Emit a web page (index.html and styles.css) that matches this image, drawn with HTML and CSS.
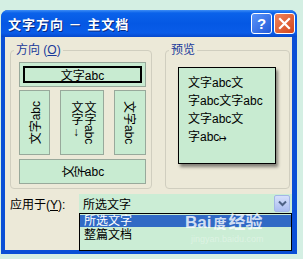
FILE: index.html
```html
<!DOCTYPE html>
<html lang="zh-CN">
<head>
<meta charset="UTF-8">
<title>文字方向 - 主文档</title>
<link rel="stylesheet" href="styles.css">
</head>
<body>
  <div class="window">
    <div class="titlebar">
      <span class="title">文字方向 － 主文档</span>
      <div class="title-buttons">
        <span class="tbtn help">?</span>
        <span class="tbtn close">
          <svg width="13" height="13" viewBox="0 0 13 13"><path d="M2 2 L11 11 M11 2 L2 11" stroke="#fff" stroke-width="2.2" stroke-linecap="square"/></svg>
        </span>
      </div>
    </div>
    <div class="client">
      <div class="groups">
        <fieldset class="group group-dir">
          <legend>方向 (<u>O</u>)</legend>
          <div class="group-body">
            <div class="opt opt-wide selected"><span class="inner">文字abc</span></div>
            <div class="opt-row">
              <div class="opt opt-v1"><span class="rot-up">文字abc</span></div>
              <div class="opt opt-v2"><span class="vert">文字abc<br>文字<span class="upright">↓</span></span></div>
              <div class="opt opt-v3"><span class="rot-down">文字abc</span></div>
            </div>
            <div class="opt opt-wide opt-bottom"><span class="side">文</span><span class="side">字</span>abc</div>
          </div>
        </fieldset>
        <fieldset class="group group-preview">
          <legend>预览</legend>
          <div class="group-body">
            <div class="page">文字abc文<br>字abc文字abc<br>文字abc文<br>字abc<span class="mark">↦</span></div>
          </div>
        </fieldset>
      </div>
      <div class="apply-row">
        <label>应用于(<u>Y</u>):</label>
        <div class="combo">
          <span class="combo-value">所选文字</span>
          <span class="combo-arrow">
            <svg width="9" height="7" viewBox="0 0 9 7"><path d="M1 1.5 L4.5 5 L8 1.5" fill="none" stroke="#4d6185" stroke-width="2"/></svg>
          </span>
          <ul class="combo-list">
            <li class="active">所选文字</li>
            <li>整篇文档</li>
          </ul>
        </div>
      </div>
      <div class="watermark">Bai<span class="paw">度</span>经验<div class="wm-url">jingyan.baidu.com</div></div>
    </div>
  </div>
</body>
</html>
```

FILE: styles.css
```css
body {
  margin: 0;
  background: #d4efe3;
  font-family: "Liberation Sans", "Noto Sans CJK SC", sans-serif;
  font-size: 12px;
  color: #000;
}
.window {
  margin: 10px 0 0 1px;
  width: 296px;
  height: 244px;
  background: #0a4fd6;
  border-radius: 7px 7px 0 0;
  display: flex;
  flex-direction: column;
}
.titlebar {
  height: 27px;
  display: flex;
  align-items: center;
  justify-content: space-between;
  padding: 0 2px 0 7px;
  border-radius: 7px 7px 0 0;
  background: linear-gradient(#3d8df5 0, #0a62ea 3px, #0558e4 50%, #0a5ce8 85%, #0648cc 100%);
}
.title {
  color: #fff;
  font-weight: bold;
  font-size: 13px;
  letter-spacing: 1px;
  text-shadow: 1px 1px 0 #0a2a80;
}
.title-buttons {
  display: flex;
  gap: 2px;
}
.tbtn {
  width: 19px;
  height: 19px;
  border: 1px solid #fff;
  border-radius: 3px;
  display: flex;
  align-items: center;
  justify-content: center;
  color: #fff;
}
.help {
  background: linear-gradient(135deg, #5b95fa, #2359d8);
  font-weight: bold;
  font-size: 15px;
}
.close {
  background: linear-gradient(135deg, #f0845c, #d2461c);
}
.client {
  flex: 1;
  margin: 0 5px 4px 4px;
  background: #ece9d8;
  position: relative;
  padding: 6px 0 0 5px;
}
.groups {
  display: flex;
  gap: 13px;
  margin-right: 2px;
}
.group {
  margin: 0;
  padding: 0;
  border: 1px solid #d0cebf;
  border-radius: 4px;
}
.group legend {
  margin-left: 3px;
  padding: 0 2px;
  line-height: 14px;
  color: #1a3a9a;
}
.group-dir {
  width: 140px;
}
.group-dir .group-body {
  padding: 5px 5px 4px 8px;
}
.group-preview {
  flex: 1;
}
.group-preview .group-body {
  padding: 10px 0 0 12px;
}
.opt {
  background: #c8ebd1;
  border: 1px solid #98a99b;
  display: flex;
  align-items: center;
  justify-content: center;
  box-sizing: border-box;
}
.opt-wide {
  height: 25px;
}
.selected {
  padding: 3px;
}
.selected .inner {
  flex: 1;
  align-self: stretch;
  border: 2px solid #000;
  display: flex;
  align-items: center;
  justify-content: center;
}
.opt-row {
  display: flex;
  gap: 10px;
  margin-top: 3px;
  height: 65px;
}
.opt-v1 { width: 31px; }
.opt-v2 { width: 44px; }
.opt-v3 { width: 32px; }
.rot-up {
  writing-mode: vertical-rl;
  text-orientation: sideways;
  transform: rotate(180deg);
}
.rot-down {
  writing-mode: vertical-rl;
  text-orientation: sideways;
}
.vert {
  writing-mode: vertical-rl;
  line-height: 13px;
}
.upright {
  text-orientation: upright;
}
.opt-bottom {
  margin-top: 4px;
}
.side {
  display: inline-block;
  transform: rotate(-90deg);
}
.page {
  width: 98px;
  height: 97px;
  box-sizing: border-box;
  background: #c8ebd1;
  border: 1px solid #000;
  box-shadow: 2px 3px 3px rgba(0, 0, 0, 0.45);
  padding: 6px 0 0 9px;
  line-height: 18px;
}
.mark {
  font-size: 9px;
}
.apply-row {
  display: flex;
  align-items: center;
  margin-top: 5px;
}
.apply-row label {
  width: 69px;
}
.combo {
  flex: 1;
  height: 19px;
  position: relative;
  display: flex;
  align-items: center;
  justify-content: space-between;
  background: #cbedd5;
  padding: 0 2px 0 4px;
}
.combo-arrow {
  width: 14px;
  height: 15px;
  border: 1px solid #a3b6e6;
  border-radius: 2px;
  background: linear-gradient(#d6e0fb, #a9bcf0);
  display: flex;
  align-items: center;
  justify-content: center;
}
.combo-list {
  position: absolute;
  top: 19px;
  left: 0;
  right: 0;
  height: 38px;
  margin: 0;
  padding: 1px 0 0;
  list-style: none;
  background: #cbedd5;
  border: 1px solid #000;
  box-sizing: border-box;
}
.combo-list li {
  line-height: 12px;
  padding-left: 4px;
  margin-bottom: 2px;
}
.combo-list .active {
  background: #316ac5;
  color: #fff;
}
.watermark {
  position: absolute;
  left: 180px;
  top: 177px;
  color: rgba(255, 255, 255, 0.8);
  font-weight: bold;
  font-size: 17px;
  line-height: 18px;
}
.paw {
  font-size: 13px;
  margin: 0 2px;
}
.wm-url {
  font-size: 9px;
  font-weight: normal;
  line-height: 12px;
  color: rgba(255, 255, 255, 0.35);
  margin-left: 6px;
}
```
